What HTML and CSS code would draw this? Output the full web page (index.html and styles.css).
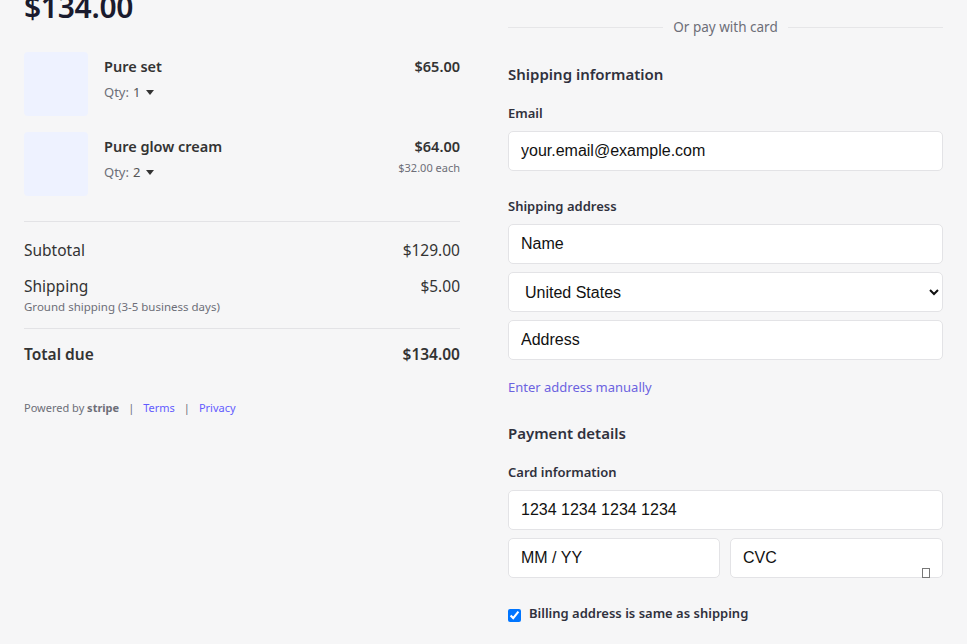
FILE: index.html
```html
<!DOCTYPE html>
<html lang="en">
<head>
<meta charset="utf-8">
<title>Checkout</title>
<link rel="stylesheet" href="styles.css">
</head>
<body>
<main class="page">
  <section class="summary">
    <div class="total-price">$134.00</div>

    <div class="items">
      <div class="item">
        <div class="thumb"></div>
        <div class="item-info">
          <div class="item-name">Pure set</div>
          <div class="qty">Qty: <span class="qty-num">1</span><span class="caret"></span></div>
        </div>
        <div class="item-price">
          <div class="price">$65.00</div>
        </div>
      </div>
      <div class="item">
        <div class="thumb"></div>
        <div class="item-info">
          <div class="item-name">Pure glow cream</div>
          <div class="qty">Qty: <span class="qty-num">2</span><span class="caret"></span></div>
        </div>
        <div class="item-price">
          <div class="price">$64.00</div>
          <div class="each">$32.00 each</div>
        </div>
      </div>
    </div>

    <div class="totals">
      <div class="row">
        <span>Subtotal</span><span>$129.00</span>
      </div>
      <div class="row ship">
        <div>
          <div>Shipping</div>
          <div class="sub">Ground shipping (3-5 business days)</div>
        </div>
        <span>$5.00</span>
      </div>
    </div>
    <div class="row total">
      <span>Total due</span><span>$134.00</span>
    </div>

    <footer class="footer">
      <span>Powered by <b>stripe</b></span>
      <span class="sep">|</span>
      <a href="#">Terms</a>
      <span class="sep">|</span>
      <a href="#">Privacy</a>
    </footer>
  </section>

  <section class="form">
    <div class="or"><span>Or pay with card</span></div>

    <h2 class="heading">Shipping information</h2>
    <label class="label">Email</label>
    <input class="field" type="text" value="your.email@example.com">

    <label class="label label-gap">Shipping address</label>
    <div class="stack">
      <input class="field" type="text" value="Name">
      <select class="field select">
        <option>United States</option>
      </select>
      <input class="field" type="text" value="Address">
    </div>
    <a class="manual" href="#">Enter address manually</a>

    <h2 class="heading heading-pay">Payment details</h2>
    <label class="label">Card information</label>
    <div class="stack">
      <input class="field" type="text" value="1234 1234 1234 1234">
      <div class="split">
        <input class="field" type="text" value="MM / YY">
        <div class="cvc-wrap">
          <input class="field" type="text" value="CVC">
          <span class="tofu"></span>
        </div>
      </div>
    </div>

    <label class="billing">
      <input type="checkbox" checked>
      <span>Billing address is same as shipping</span>
    </label>
  </section>
</main>
</body>
</html>
```

FILE: styles.css
```css
* { box-sizing: border-box; }

html, body {
  margin: 0;
  height: 100%;
  overflow: hidden;
}

body {
  background: #f6f6f7;
  font-family: "Noto Sans", "Open Sans", sans-serif;
  color: #30313d;
}

.page {
  display: grid;
  grid-template-columns: 436px 435px;
  column-gap: 48px;
  padding: 0 24px;
}

/* ---------- Left: summary ---------- */
.total-price {
  margin-top: -13px;
  height: 40px;
  line-height: 40px;
  font-size: 30px;
  font-weight: 600;
  color: #1a1b2e;
  letter-spacing: -0.3px;
}

.items {
  margin-top: 25px;
  display: flex;
  flex-direction: column;
  gap: 16px;
}

.item {
  display: flex;
  gap: 16px;
}

.thumb {
  width: 64px;
  height: 64px;
  border-radius: 4px;
  background: #eef2ff;
  flex: none;
}

.item-info {
  flex: 1;
  padding-top: 4px;
}

.item-name {
  font-size: 14.5px;
  font-weight: 600;
  line-height: 20px;
  color: #333;
}

.qty {
  margin-top: 6px;
  font-size: 13px;
  line-height: 20px;
  color: #6d6e78;
  display: flex;
  align-items: center;
}

.qty-num {
  color: #555;
  margin-left: 4px;
}

.caret {
  margin-left: 6px;
  width: 0;
  height: 0;
  border-left: 4px solid transparent;
  border-right: 4px solid transparent;
  border-top: 5px solid #333;
}

.item-price {
  padding-top: 4px;
  text-align: right;
}

.price {
  font-size: 14.5px;
  font-weight: 600;
  line-height: 20px;
  color: #333;
}

.each {
  margin-top: 5px;
  font-size: 11px;
  line-height: 14px;
  color: #6d6e78;
}

.totals {
  margin-top: 25px;
  border-top: 1px solid #e3e3e6;
  padding-top: 16px;
  padding-bottom: 13px;
  border-bottom: 1px solid #e3e3e6;
  display: flex;
  flex-direction: column;
  gap: 12px;
}

.row {
  display: flex;
  justify-content: space-between;
  align-items: flex-start;
  font-size: 15.5px;
  line-height: 24px;
  color: #333;
}

.row .sub {
  margin-top: 1px;
  font-size: 11.5px;
  line-height: 16px;
  color: #6d6e78;
}

.row.total {
  margin-top: 13px;
  font-weight: 600;
}

.footer {
  margin-top: 34px;
  font-size: 11px;
  line-height: 16px;
  color: #6d6e78;
  display: flex;
  gap: 9px;
}

.footer b {
  font-weight: 700;
  color: #6d6e78;
}

.footer a {
  color: #635bff;
  text-decoration: none;
}

/* ---------- Right: form ---------- */
.form {
  padding-top: 17px;
  display: flex;
  flex-direction: column;
}

.or {
  display: flex;
  align-items: center;
  gap: 10px;
  height: 20px;
  font-size: 13.5px;
  color: #6d6e78;
}

.or::before,
.or::after {
  content: "";
  flex: 1;
  border-top: 1px solid #e6e6e8;
}

.heading {
  margin: 25px 0 0;
  font-size: 15px;
  font-weight: 600;
  line-height: 24px;
  color: #30313d;
}

.heading-pay {
  margin-top: 24px;
}

.label {
  margin-top: 18px;
  font-size: 13px;
  font-weight: 600;
  line-height: 18px;
  color: #30313d;
}

.label-gap {
  margin-top: 26px;
}

.field {
  display: block;
  width: 100%;
  height: 40px;
  margin-top: 9px;
  padding: 0 12px;
  border: 1px solid #e3e3e6;
  border-radius: 5px;
  background: #fff;
  font-family: "Liberation Sans", Arial, sans-serif;
  font-size: 16px;
  color: #111;
  outline: none;
}

.stack {
  display: flex;
  flex-direction: column;
  gap: 8px;
  margin-top: 9px;
}

.stack .field,
.split .field {
  margin-top: 0;
}

.select {
  padding-left: 12px;
}

.split {
  display: grid;
  grid-template-columns: 212px 1fr;
  gap: 10px;
}

.cvc-wrap {
  position: relative;
}

.tofu {
  position: absolute;
  right: 13px;
  bottom: 0;
  width: 8px;
  height: 10px;
  border: 1px solid #777;
}

.manual {
  margin-top: 17px;
  font-size: 13px;
  line-height: 20px;
  color: #6c63e0;
  text-decoration: none;
}

.billing {
  margin-top: 26px;
  display: flex;
  align-items: flex-start;
  gap: 8px;
  font-size: 13px;
  font-weight: 600;
  line-height: 18px;
  color: #30313d;
}

.billing input {
  margin: 5px 0 0;
  width: 13px;
  height: 13px;
}
```
